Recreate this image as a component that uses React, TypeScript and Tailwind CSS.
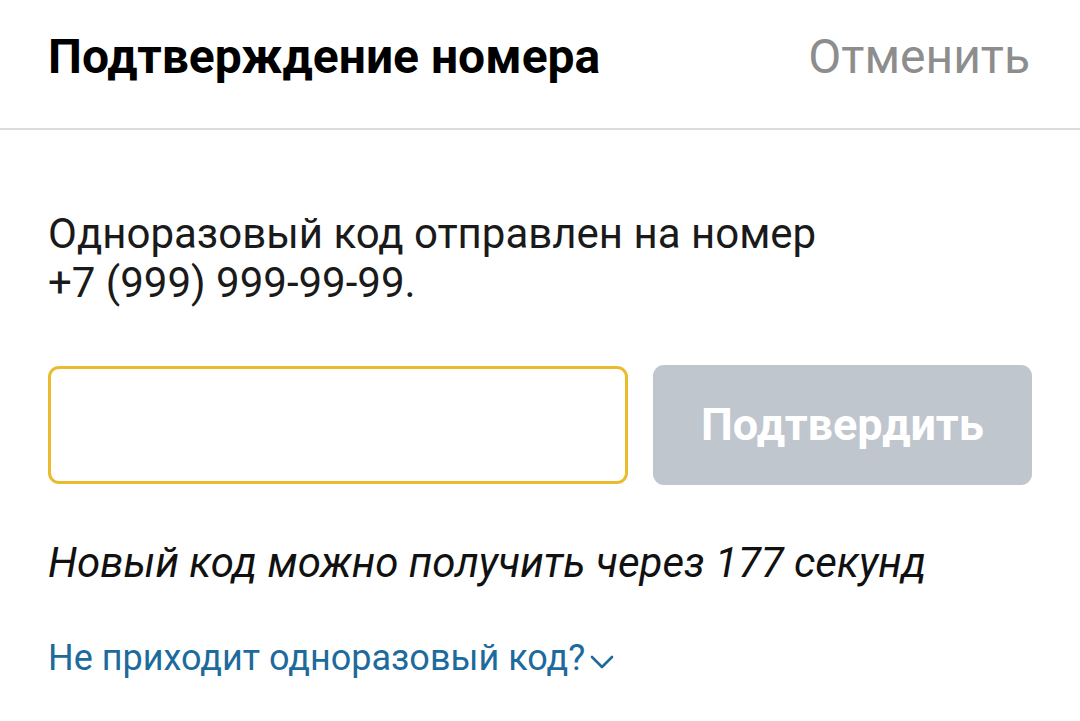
import React from "react";

export default function App() {
  return (
    <div
      className="w-[1080px] h-[721px] bg-white overflow-hidden"
      style={{ fontFamily: "Roboto, 'Noto Sans', sans-serif" }}
    >
      {/* Header */}
      <div className="h-[130px] flex items-baseline justify-between pt-[33px] pl-[48px] pr-[50px] border-b-2 border-[#dcdcdc]">
        <h1 className="text-[48px] font-bold text-black leading-none">
          Подтверждение номера
        </h1>
        <button className="text-[48px] text-[#8d8d8d] leading-none">Отменить</button>
      </div>

      <div className="px-[48px]">
        <p className="mt-[79px] text-[42px] leading-[49px] text-[#1a1a1a]">
          Одноразовый код отправлен на номер
          <br />
          +7 (999) 999-99-99.
        </p>

        <div className="mt-[58px] flex items-center gap-[25px]">
          <input
            className="w-[580px] h-[118px] rounded-[11px] border-[3px] border-[#eabb2c] outline-none px-[20px] text-[42px]"
            type="text"
          />
          <button className="flex-1 h-[120px] rounded-[11px] bg-[#bfc6ce] text-white text-[45px] font-bold flex items-center justify-center">
            Подтвердить
          </button>
        </div>

        <p className="mt-[53px] text-[42px] italic text-[#111] leading-[49px]">
          Новый код можно получить через 177 секунд
        </p>

        <button className="mt-[53px] flex items-baseline gap-[5px] text-[36px] text-[#1d6a9c] leading-none">
          Не приходит одноразовый код?
          <svg
            width="24"
            height="16"
            viewBox="0 0 24 16"
            fill="none"
            stroke="#1d6a9c"
            strokeWidth="2.6"
            strokeLinecap="round"
            strokeLinejoin="round"
            className="mb-[3px]"
          >
            <path d="M2 3l10 10 10-10" />
          </svg>
        </button>
      </div>
    </div>
  );
}
